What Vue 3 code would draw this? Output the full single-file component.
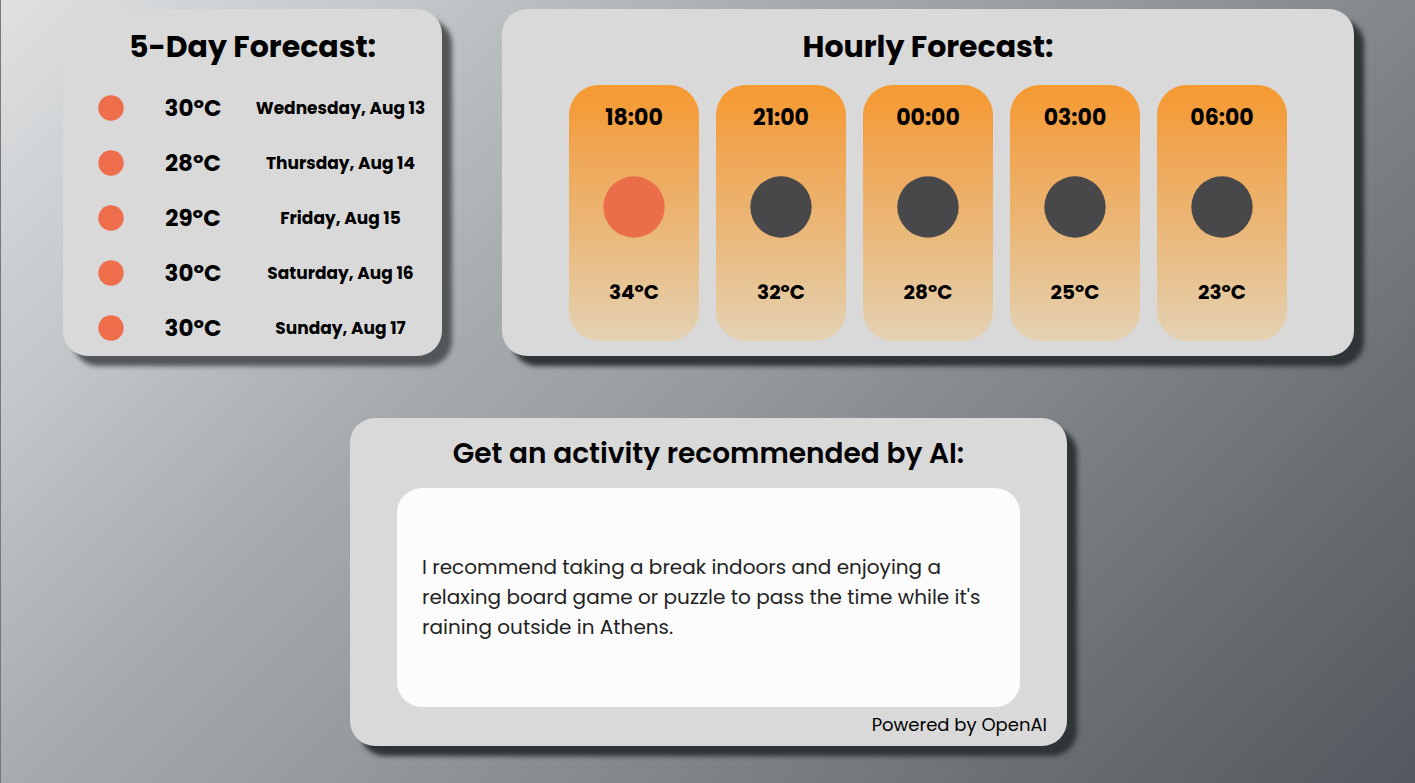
<script setup>
const days = [
  { temp: 30, date: 'Wednesday, Aug 13' },
  { temp: 28, date: 'Thursday, Aug 14' },
  { temp: 29, date: 'Friday, Aug 15' },
  { temp: 30, date: 'Saturday, Aug 16' },
  { temp: 30, date: 'Sunday, Aug 17' },
]

const hours = [
  { time: '18:00', temp: 34, sky: 'day' },
  { time: '21:00', temp: 32, sky: 'night' },
  { time: '00:00', temp: 28, sky: 'night' },
  { time: '03:00', temp: 25, sky: 'night' },
  { time: '06:00', temp: 23, sky: 'night' },
]
</script>

<template>
  <main class="page">
    <div class="forecasts">
      <section class="card daily">
        <h2 class="title">5-Day Forecast:</h2>
        <ul class="days">
          <li v-for="day in days" :key="day.date" class="day">
            <svg class="day-icon" viewBox="0 0 26 26" aria-hidden="true">
              <circle cx="13" cy="13" r="12.7" fill="#ee6e4c" />
            </svg>
            <span class="day-temp">{{ day.temp }}ºC</span>
            <span class="day-date">{{ day.date }}</span>
          </li>
        </ul>
      </section>

      <section class="card hourly">
        <h2 class="title">Hourly Forecast:</h2>
        <ul class="hours">
          <li v-for="hour in hours" :key="hour.time" class="hour">
            <span class="hour-time">{{ hour.time }}</span>
            <svg class="hour-icon" :class="hour.sky" viewBox="0 0 62 62" aria-hidden="true">
              <circle cx="31" cy="31" r="30.7" />
            </svg>
            <span class="hour-temp">{{ hour.temp }}ºC</span>
          </li>
        </ul>
      </section>
    </div>

    <section class="card activity">
      <h2 class="title small">Get an activity recommended by AI:</h2>
      <div class="answer">
        <p>
          I recommend taking a break indoors and enjoying a relaxing board game or puzzle to pass
          the time while it's raining outside in Athens.
        </p>
      </div>
      <p class="credit">Powered by OpenAI</p>
    </section>
  </main>
</template>

<style>
body {
  margin: 0;
}
</style>

<style scoped>
.page {
  box-sizing: border-box;
  min-height: 100vh;
  padding: 9px 61px 37px 62px;
  border-left: 1px solid #77787a;
  background: linear-gradient(135deg, #dfe0e2 0%, #c3c8ca 18%, #a6acae 36%, #94999c 51%, #80868a 65%, #696e72 82%, #53585e 100%);
  font-family: Poppins, Inter, "Open Sans", sans-serif;
  color: #000;
}

.forecasts {
  display: grid;
  grid-template-columns: 379fr 852fr;
  gap: 60px;
}

.card {
  box-sizing: border-box;
  border-radius: 25px;
  background: #d9d9d9;
  box-shadow: 10px 10px 5px #2f3436;
}

.card.daily {
  box-shadow: 10px 10px 5px #525658;
}

.title {
  margin: 0;
  padding-top: 16px;
  font-size: 30px;
  line-height: 44px;
  font-weight: 700;
  text-align: center;
}

.title.small {
  font-size: 28px;
  line-height: 40px;
  font-weight: 600;
}

.days,
.hours {
  margin: 0;
  padding: 0;
  list-style: none;
}

.days {
  padding-top: 11px;
}

.day {
  display: grid;
  grid-template-columns: 96fr 68fr 12fr 203fr;
  align-items: center;
  height: 55px;
  font-weight: 700;
  white-space: nowrap;
}

.day-icon {
  width: 26px;
  height: 26px;
  justify-self: center;
}

.day-temp {
  font-size: 23px;
  text-align: center;
}

.day-date {
  grid-column: 4;
  font-size: 17px;
  text-align: center;
}

.hours {
  display: grid;
  grid-template-columns: repeat(5, 1fr);
  gap: 17px;
  padding: 16px 67px 15px;
}

.hour {
  display: flex;
  flex-direction: column;
  align-items: center;
  justify-content: space-between;
  box-sizing: border-box;
  height: 256px;
  padding: 18px 0 34px;
  border-radius: 30px;
  background: linear-gradient(#f59a32 0%, #f49c38 7%, #f0a653 25%, #ecb16a 45%, #e8bf89 70%, #e4d2b4 100%);
  font-weight: 700;
}

.hour-time {
  font-size: 22px;
  line-height: 30px;
}

.hour-icon {
  width: 62px;
  height: 62px;
  margin-top: 4px;
}

.hour-icon.day {
  fill: #ea6e4a;
}

.hour-icon.night {
  fill: #484749;
}

.hour-temp {
  font-size: 20px;
  line-height: 30px;
}

.activity {
  width: 717px;
  max-width: 100%;
  margin: 62px auto 0;
}

.answer {
  display: flex;
  align-items: center;
  box-sizing: border-box;
  min-height: 219px;
  margin: 14px 47px 0;
  padding: 24px 25px 26px;
  border-radius: 25px;
  background: #fcfcfc;
  color: #222;
  font-size: 20px;
  line-height: 30px;
}

.answer p {
  margin: 0;
}

.credit {
  margin: 0;
  padding: 4px 20px 7px;
  font-size: 18px;
  line-height: 28px;
  text-align: right;
}
</style>
